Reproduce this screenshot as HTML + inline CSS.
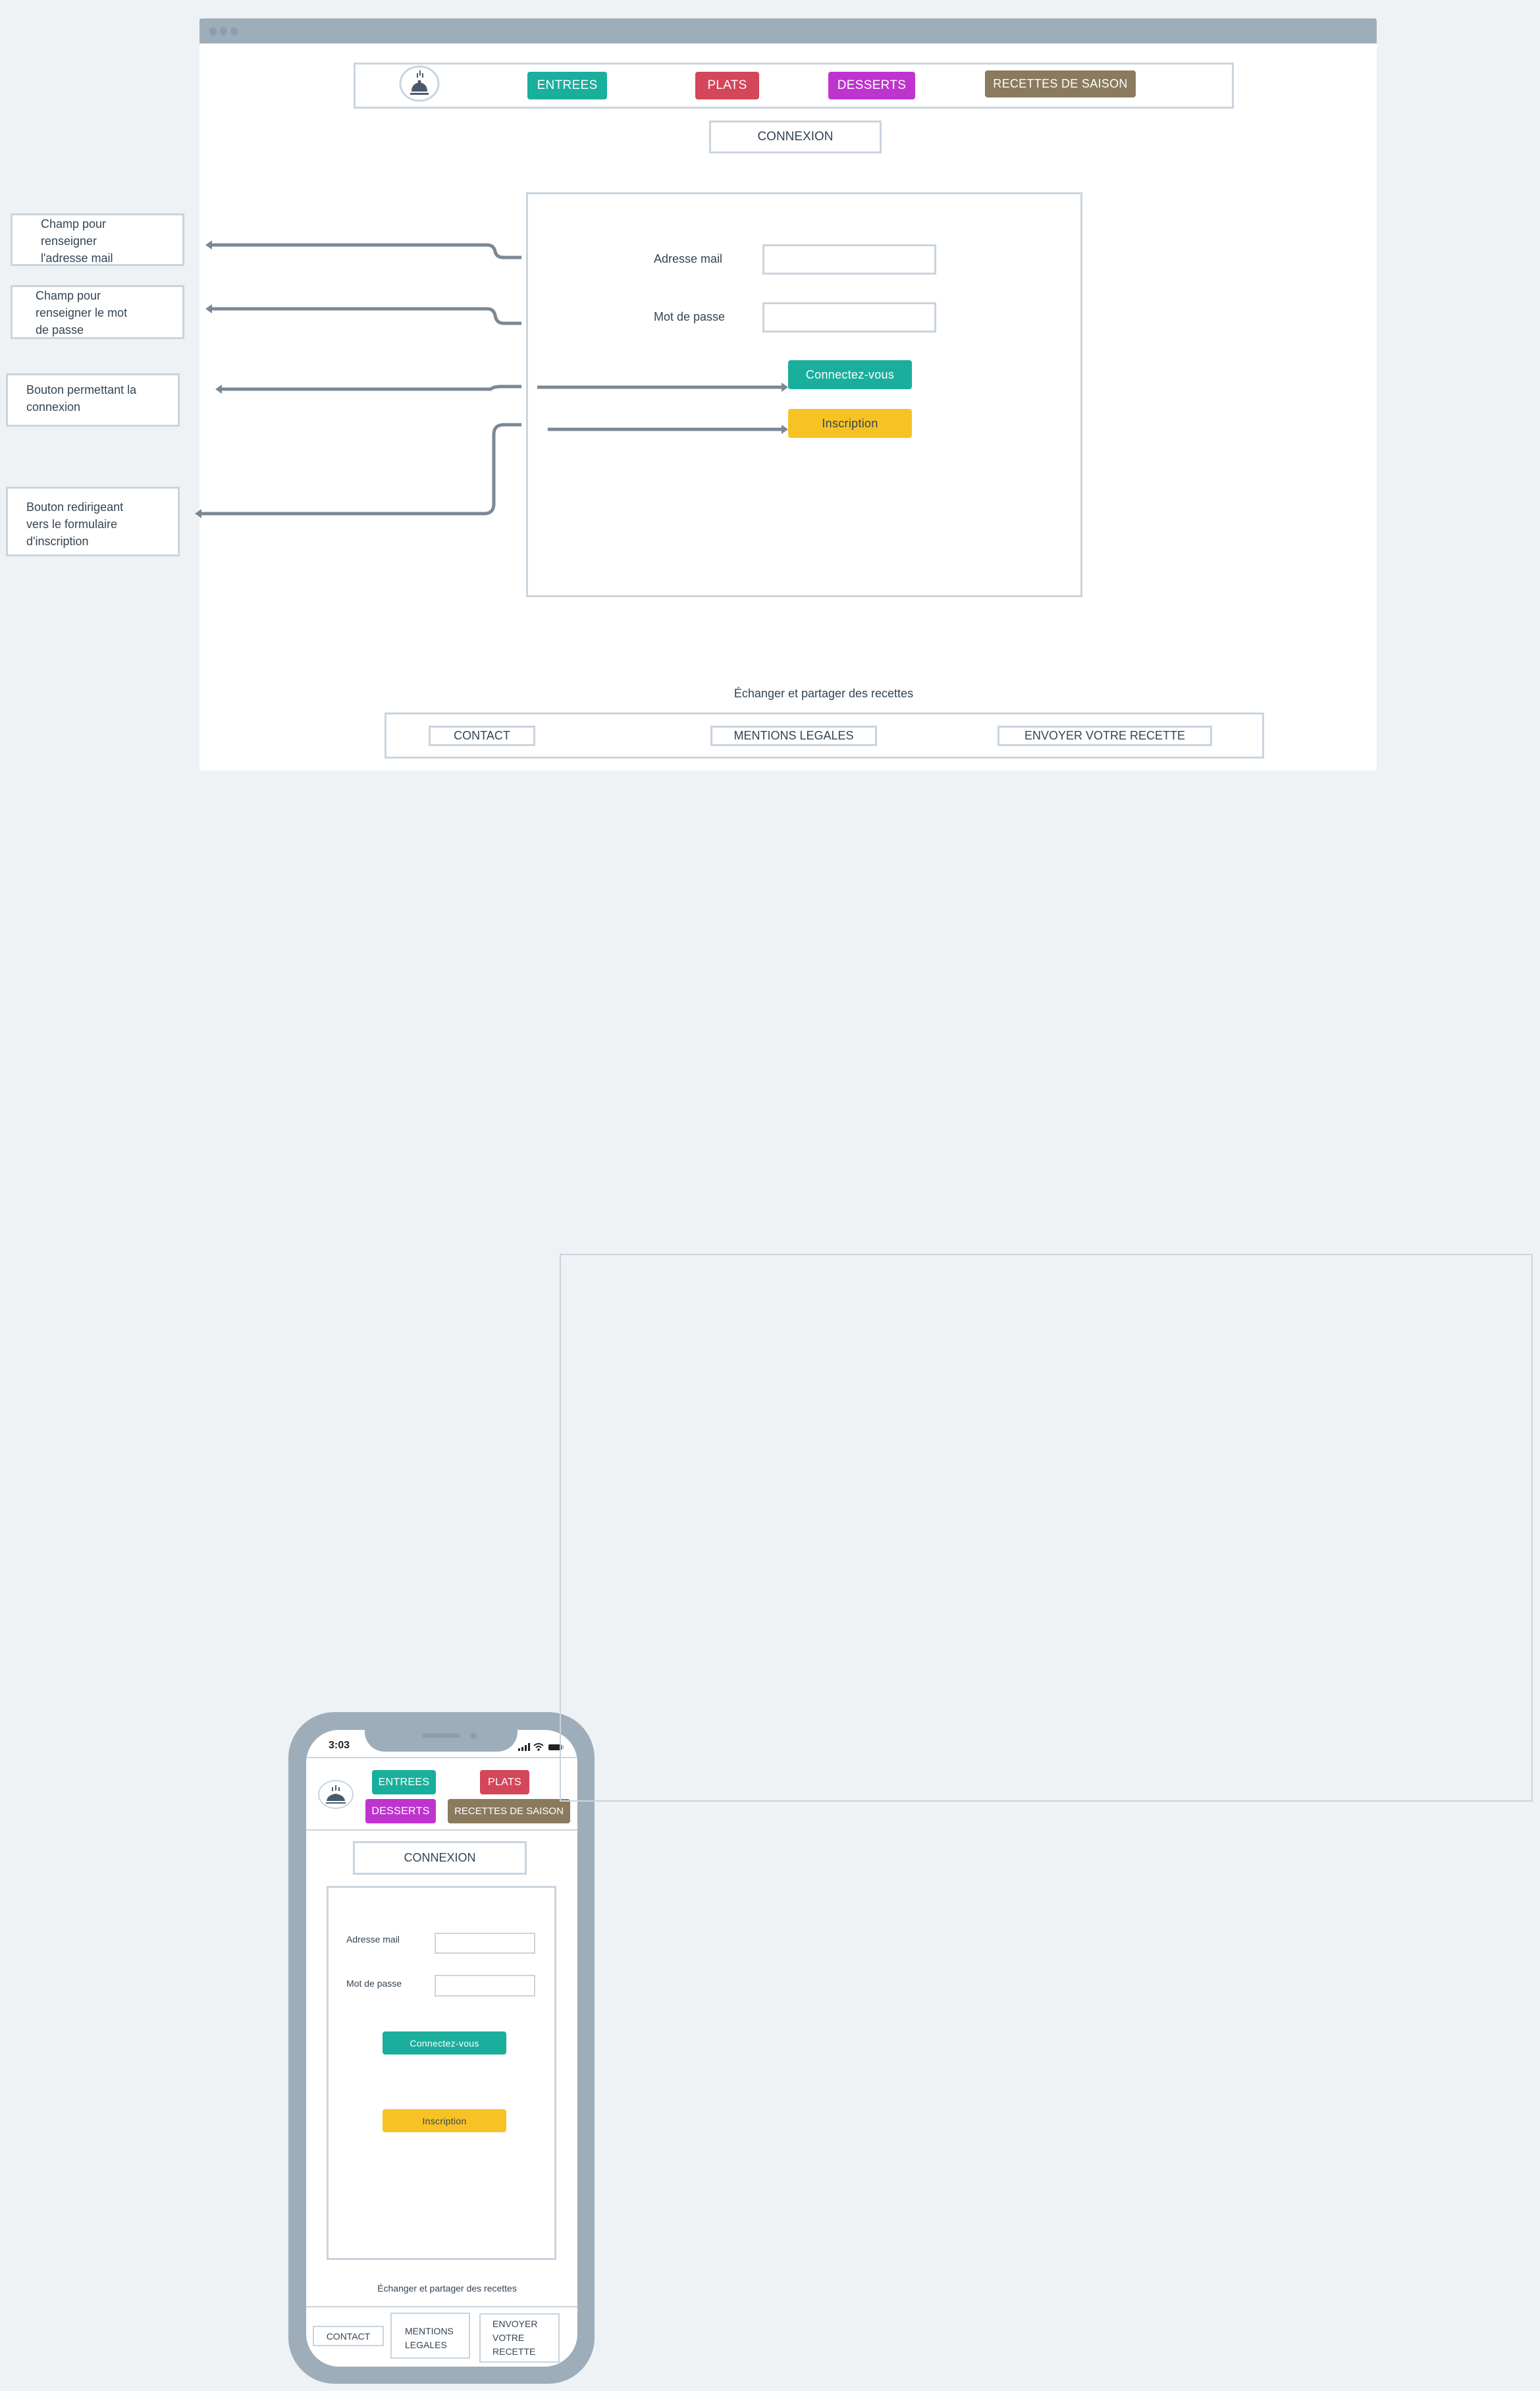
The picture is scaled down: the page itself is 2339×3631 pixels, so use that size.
<!DOCTYPE html>
<html><head><meta charset="utf-8"><style>
*{box-sizing:border-box;margin:0;padding:0}
body{width:2339px;height:3631px;background:#eef2f5;position:relative;font-family:"Liberation Sans",sans-serif;color:#344454;overflow:hidden}
.a{position:absolute}
.bx{position:absolute;border:3px solid #c9d4de;background:#fff}
.btn{position:absolute;color:#fff;display:flex;align-items:center;justify-content:center;border-radius:4px;font-size:19px;letter-spacing:0.3px}
.c{display:flex;align-items:center;justify-content:center;text-align:center}
.ann{position:absolute;border:3px solid #c9d4de;background:#fff;font-size:18px;line-height:26px;color:#344454}
</style></head><body>
<div class="a" style="left:303px;top:28px;width:1788px;height:1142px;background:#fff"></div>
<div class="a" style="left:303px;top:28px;width:1788px;height:38px;background:#9eadba;border-radius:3px 3px 0 0"></div>
<div class="a" style="left:318px;top:41px;width:11px;height:13px;border-radius:50%;background:#8d9dab"></div>
<div class="a" style="left:334px;top:41px;width:11px;height:13px;border-radius:50%;background:#8d9dab"></div>
<div class="a" style="left:350px;top:41px;width:11px;height:13px;border-radius:50%;background:#8d9dab"></div>

<div class="bx" style="left:537px;top:95px;width:1337px;height:70px"></div>
<svg class="a" style="left:605px;top:97px" width="64" height="60" viewBox="0 0 64 60">
<ellipse cx="32" cy="30" rx="29" ry="26" fill="#fff" stroke="#c9d4de" stroke-width="3"/>
<path d="M20 42 Q20 30 32 28 Q44 30 44 42Z" fill="#4a5a6a"/><circle cx="32" cy="27" r="2.5" fill="#4a5a6a"/>
<rect x="18" y="44" width="28" height="3" fill="#4a5a6a"/>
<rect x="28" y="14" width="2" height="7" fill="#4a5a6a"/><rect x="32" y="10" width="2" height="8" fill="#4a5a6a"/><rect x="36" y="14" width="2" height="7" fill="#4a5a6a"/>
</svg>
<div class="btn" style="left:801px;top:109px;width:121px;height:42px;background:#1aaf9c">ENTREES</div>
<div class="btn" style="left:1056px;top:109px;width:97px;height:42px;background:#d4465a">PLATS</div>
<div class="btn" style="left:1258px;top:109px;width:132px;height:42px;background:#bf33cf">DESSERTS</div>
<div class="btn" style="left:1496px;top:107px;width:229px;height:41px;background:#8a7a5e;font-size:18px">RECETTES DE SAISON</div>
<div class="bx c" style="left:1077px;top:183px;width:262px;height:50px;font-size:19px">CONNEXION</div>

<div class="bx" style="left:799px;top:292px;width:845px;height:615px"></div>
<div class="a" style="left:993px;top:383px;font-size:18px">Adresse mail</div>
<div class="bx" style="left:1158px;top:371px;width:264px;height:46px"></div>
<div class="a" style="left:993px;top:471px;font-size:18px">Mot de passe</div>
<div class="bx" style="left:1158px;top:459px;width:264px;height:46px"></div>
<div class="btn" style="left:1197px;top:547px;width:188px;height:44px;background:#1aaf9c;font-size:18px">Connectez-vous</div>
<div class="btn" style="left:1197px;top:621px;width:188px;height:44px;background:#f7c324;color:#344454;font-size:18px">Inscription</div>

<div class="ann" style="left:16px;top:324px;width:264px;height:80px;padding:0 0 0 43px">Champ pour<br>renseigner<br>l'adresse mail</div>
<div class="ann" style="left:16px;top:433px;width:264px;height:82px;padding:0 0 0 35px">Champ pour<br>renseigner le mot<br>de passe</div>
<div class="ann" style="left:9px;top:567px;width:264px;height:81px;padding:9px 0 0 28px">Bouton permettant la<br>connexion</div>
<div class="ann" style="left:9px;top:739px;width:264px;height:106px;padding:15px 0 0 28px">Bouton redirigeant<br>vers le formulaire<br>d'inscription</div>

<svg class="a" style="left:0;top:0" width="1700" height="900">
<g fill="none" stroke="#7a8896" stroke-width="5">
<path d="M320 372 H740 Q750 372 752 382 Q754 391 765 391 H792"/>
<path d="M320 469 H740 Q750 469 752 479 Q754 491 765 491 H792"/>
<path d="M334 591 H745 Q750 587 760 587 H792"/>
<path d="M816 588 H1188"/>
<path d="M832 652 H1188"/>
<path d="M792 645 H765 Q750 645 750 660 V765 Q750 780 735 780 H304"/>
</g>
<g fill="#7a8896">
<path d="M312 372 L322 365 V379Z"/><path d="M312 469 L322 462 V476Z"/><path d="M327 591 L337 584 V598Z"/><path d="M296 780 L306 773 V787Z"/>
<path d="M1197 588 L1187 581 V595Z"/><path d="M1197 652 L1187 645 V659Z"/>
</g></svg>

<div class="a" style="left:1000px;top:1043px;width:502px;text-align:center;font-size:18px">Échanger et partager des recettes</div>
<div class="bx" style="left:584px;top:1082px;width:1336px;height:70px"></div>
<div class="bx c" style="left:651px;top:1102px;width:162px;height:31px;font-size:18px">CONTACT</div>
<div class="bx c" style="left:1079px;top:1102px;width:253px;height:31px;font-size:18px">MENTIONS LEGALES</div>
<div class="bx c" style="left:1515px;top:1102px;width:326px;height:31px;font-size:18px">ENVOYER VOTRE RECETTE</div>

<div class="a" style="left:438px;top:2600px;width:465px;height:1020px;background:#9eadba;border-radius:70px"></div>
<div class="a" style="left:465px;top:2627px;width:412px;height:967px;background:#fff;border-radius:50px"></div>
<div class="a" style="left:554px;top:2620px;width:232px;height:40px;background:#9eadba;border-radius:0 0 30px 30px"></div>
<div class="a" style="left:641px;top:2632px;width:58px;height:7px;background:#8d9dab;border-radius:4px"></div>
<div class="a" style="left:714px;top:2631px;width:10px;height:10px;background:#8d9dab;border-radius:50%"></div>
<div class="a" style="left:499px;top:2642px;font-size:16px;font-weight:bold;color:#222">3:03</div>
<svg class="a" style="left:785px;top:2645px" width="76" height="15"><rect x="2" y="10" width="3" height="4" fill="#222"/><rect x="7" y="8" width="3" height="6" fill="#222"/><rect x="12" y="5" width="3" height="9" fill="#222"/><rect x="17" y="2" width="3" height="12" fill="#222"/><path d="M26 6 Q33 0 40 6 M29 9 Q33 5 37 9" stroke="#222" stroke-width="2" fill="none"/><circle cx="33" cy="12" r="1.8" fill="#222"/><rect x="48" y="4" width="20" height="9" rx="2" fill="#222"/><rect x="69" y="6" width="2" height="5" fill="#aaa"/></svg>
<div class="a" style="left:465px;top:2668px;width:412px;height:2px;background:#c9d4de"></div>
<svg class="a" style="left:482px;top:2702px" width="56" height="46"><ellipse cx="28" cy="23" rx="26" ry="21" fill="#fff" stroke="#c9d4de" stroke-width="2"/><path d="M14 33 Q15 24 28 22 Q41 24 42 33Z" fill="#4a5a6a"/><rect x="13" y="35" width="30" height="2" fill="#4a5a6a"/><rect x="22" y="12" width="2" height="6" fill="#4a5a6a"/><rect x="27" y="9" width="2" height="8" fill="#4a5a6a"/><rect x="32" y="12" width="2" height="6" fill="#4a5a6a"/></svg>
<div class="btn" style="left:565px;top:2688px;width:97px;height:37px;background:#1aaf9c;font-size:16px">ENTREES</div>
<div class="btn" style="left:729px;top:2688px;width:75px;height:37px;background:#d4465a;font-size:16px">PLATS</div>
<div class="btn" style="left:555px;top:2732px;width:107px;height:37px;background:#bf33cf;font-size:16px">DESSERTS</div>
<div class="btn" style="left:680px;top:2732px;width:186px;height:37px;background:#8a7a5e;font-size:15px;letter-spacing:0">RECETTES DE SAISON</div>
<div class="a" style="left:465px;top:2778px;width:412px;height:2px;background:#c9d4de"></div>
<div class="bx c" style="left:536px;top:2796px;width:264px;height:51px;font-size:18px">CONNEXION</div>
<div class="bx" style="left:496px;top:2864px;width:349px;height:568px"></div>
<div class="a" style="left:526px;top:2937px;font-size:14px">Adresse mail</div>
<div class="bx" style="left:660px;top:2935px;width:153px;height:32px;border-width:2px"></div>
<div class="a" style="left:526px;top:3004px;font-size:14px">Mot de passe</div>
<div class="bx" style="left:660px;top:2999px;width:153px;height:33px;border-width:2px"></div>
<div class="btn" style="left:581px;top:3085px;width:188px;height:35px;background:#1aaf9c;font-size:14px">Connectez-vous</div>
<div class="btn" style="left:581px;top:3203px;width:188px;height:35px;background:#f7c324;color:#344454;font-size:14px">Inscription</div>
<div class="a" style="left:520px;top:3467px;width:318px;text-align:center;font-size:14px">Échanger et partager des recettes</div>
<div class="a" style="left:465px;top:3502px;width:412px;height:2px;background:#c9d4de"></div>
<div class="bx c" style="left:475px;top:3532px;width:108px;height:31px;font-size:14px;border-width:2px">CONTACT</div>
<div class="bx" style="left:593px;top:3512px;width:121px;height:70px;font-size:14px;border-width:2px;padding:16px 0 0 20px;line-height:21px">MENTIONS<br>LEGALES</div>
<div class="bx" style="left:728px;top:3513px;width:122px;height:75px;font-size:14px;border-width:2px;padding:4px 0 0 18px;line-height:21px">ENVOYER<br>VOTRE<br>RECETTE</div>

<div class="a" style="left:850px;top:1904px;width:1478px;height:832px;border:2px solid #c9d4de"></div>
</body></html>
